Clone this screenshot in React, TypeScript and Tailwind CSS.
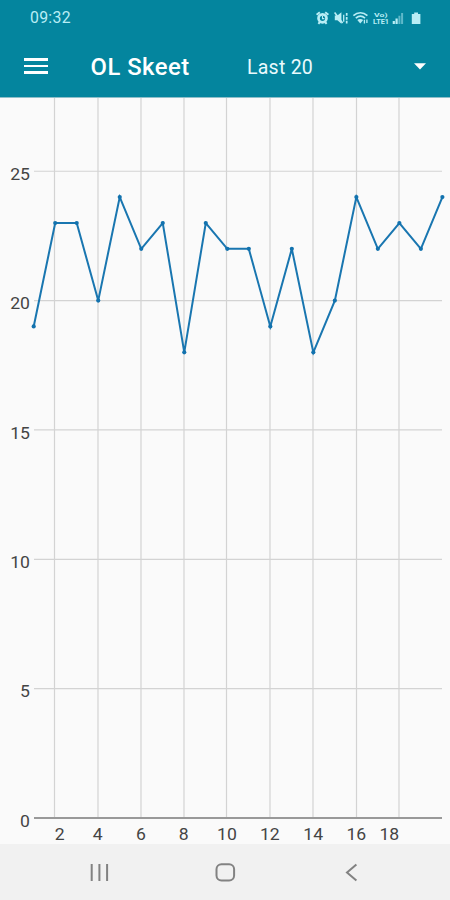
const scores = [19, 23, 23, 20, 24, 22, 23, 18, 23, 22, 22, 19, 22, 18, 20, 24, 22, 23, 22, 24]

const yTicks = [0, 5, 10, 15, 20, 25]

const xTicks = [
  { label: '2', line: 54.5, text: 59.7 },
  { label: '4', line: 98, text: 97.7 },
  { label: '6', line: 141, text: 141 },
  { label: '8', line: 184, text: 183.8 },
  { label: '10', line: 226.5, text: 227 },
  { label: '12', line: 270, text: 269.8 },
  { label: '14', line: 313, text: 313.2 },
  { label: '16', line: 356.5, text: 356.3 },
  { label: '18', line: 399, text: 389.3 },
]

const CHART_TOP = 98
const DIGIT_WIDTH = 9.9
const px = (i: number) => 33.7 + i * 21.51
const py = (v: number) => 818 - CHART_TOP - v * 25.87

function AxisLabel({ x, y, anchor, label }: { x: number; y: number; anchor: 'middle' | 'end'; label: string }) {
  return (
    <text x={x} y={y} textAnchor={anchor} textLength={label.length * DIGIT_WIDTH} lengthAdjust="spacingAndGlyphs">
      {label}
    </text>
  )
}

function StatusIcons() {
  return (
    <svg className="h-4 w-[108px] text-[#b9edf5]" viewBox="315 9 108 16" fill="none" stroke="currentColor">
      {/* alarm */}
      <circle cx="322.5" cy="17.3" r="4" strokeWidth="2.7" />
      <path d="M316.6 13.7l3.2-2.5M328.4 13.7l-3.2-2.5M318.4 22.8l1.5-1.8M326.6 22.8l-1.5-1.8" strokeWidth="2" />
      <path d="M322.5 15v2.6h1.8" strokeWidth="1.1" />
      {/* muted, vibrate */}
      <path d="M334.8 14.5h2.6l4-3.3v11.6l-4-3.5h-2.6z" fill="currentColor" stroke="none" />
      <path d="M334.6 11.5l8 10.6" strokeWidth="1.6" />
      <path d="M343.7 13.8v7" strokeWidth="1.3" />
      <path d="M346.7 12v10.6" strokeWidth="1.7" strokeDasharray="2.8 1.1" />
      {/* wifi */}
      <path d="M353.4 14.7c4.2-4 9.8-4 14 0M355.8 17.2c2.8-2.5 6.4-2.5 9.2 0" strokeWidth="1.6" />
      <path d="M357.3 19c1.7-1.5 4.2-1.5 5.9 0l-2.9 3.4z" fill="currentColor" stroke="none" />
      <path d="M364.4 18.8v3.8M366.9 18.5v3.4" strokeWidth="1.3" />
      {/* VoLTE */}
      <g fill="currentColor" stroke="none" className="font-[Roboto,sans-serif] font-bold">
        <text x="374" y="16.4" fontSize="6" textLength="13.5" lengthAdjust="spacingAndGlyphs">Vo)</text>
        <text x="373" y="23" fontSize="6.6" textLength="16" lengthAdjust="spacingAndGlyphs">LTE1</text>
      </g>
      {/* signal */}
      <path d="M393.8 20v2.9M396.6 17.6v5.3" strokeWidth="2.2" />
      <path d="M399.4 14.8v8.1M402.1 12v10.9" strokeWidth="2" opacity=".5" />
      {/* battery */}
      <path d="M414.2 11.6h3.8v1.5h2.4v10h-8.6v-10h2.4z" fill="currentColor" stroke="none" />
    </svg>
  )
}

function StatusBar() {
  return (
    <div className="flex h-9 items-center justify-between pr-[27px] pl-[30px]">
      <span className="text-[15.8px] tracking-[0.3px] text-[#b9edf5]">09:32</span>
      <StatusIcons />
    </div>
  )
}

function Toolbar() {
  return (
    <div className="flex h-[60px] items-center pr-6 pl-[23.5px]">
      <button aria-label="Menu" className="flex w-6 flex-col gap-1">
        <span className="h-[2.5px] bg-white" />
        <span className="h-[2.5px] bg-white" />
        <span className="h-[2.5px] bg-white" />
      </button>
      <h1 className="ml-[43px] w-[156.5px] pt-1 text-[23.8px] font-medium tracking-[0.5px] text-white">OL Skeet</h1>
      <button className="flex flex-1 items-center justify-between text-[19.5px] tracking-[0.25px] text-[#e9fafd]">
        <span className="pt-[3px]">Last 20</span>
        <svg className="h-[7px] w-3" viewBox="0 0 12 7" fill="white">
          <path d="M0 .3h12L6 6.6z" />
        </svg>
      </button>
    </div>
  )
}

function ScoreChart() {
  return (
    <svg className="block h-[746px] w-[450px]" viewBox="0 0 450 746">
      <g stroke="#d3d3d3" strokeWidth="1.2">
        {xTicks.map((t) => (
          <line key={t.label} x1={t.line} x2={t.line} y1="0" y2="720" />
        ))}
        {yTicks.slice(1).map((v) => (
          <line key={v} x1="34" x2="442" y1={py(v)} y2={py(v)} />
        ))}
      </g>
      <line x1="34" x2="442" y1="720" y2="720" stroke="#999" strokeWidth="2.2" />

      <g fill="#444" fontSize="15.8">
        {yTicks.map((v) => (
          <AxisLabel key={v} x={30} y={py(v) + 8.6} anchor="end" label={String(v)} />
        ))}
        {xTicks.map((t) => (
          <AxisLabel key={t.label} x={t.text} y={742.2} anchor="middle" label={t.label} />
        ))}
      </g>

      <polyline
        points={scores.map((s, i) => `${px(i)},${py(s)}`).join(' ')}
        fill="none"
        stroke="#1976b0"
        strokeWidth="2"
      />
      {scores.map((s, i) => (
        <circle key={i} cx={px(i)} cy={py(s)} r="2.1" fill="#1272ae" />
      ))}
    </svg>
  )
}

function NavBar() {
  return (
    <nav className="flex h-14 items-center bg-[#f1f1f1] px-9 text-[#828282]">
      <button aria-label="Recents" className="flex flex-1 justify-center">
        <svg className="h-6 w-6" viewBox="0 0 24 24" stroke="currentColor" strokeWidth="2">
          <path d="M4.7 4v17M12.4 4v17M20.1 4v17" />
        </svg>
      </button>
      <button aria-label="Home" className="flex flex-1 justify-center">
        <svg className="h-6 w-6" viewBox="0 0 24 24" fill="none" stroke="currentColor" strokeWidth="2">
          <rect x="3.5" y="4.2" width="17.6" height="16.4" rx="5" />
        </svg>
      </button>
      <button aria-label="Back" className="flex flex-1 justify-center">
        <svg className="h-6 w-6" viewBox="0 0 24 24" fill="none" stroke="currentColor" strokeWidth="2">
          <path d="M17.4 4.4L8 12.4l9.4 8" />
        </svg>
      </button>
    </nav>
  )
}

export default function App() {
  return (
    <div className="flex h-[900px] w-[450px] flex-col overflow-hidden bg-[#fafafa] font-[Roboto,sans-serif]">
      <header className="h-[98px] shrink-0 border-b border-[#8fbfc9] bg-[#04859e]">
        <StatusBar />
        <Toolbar />
      </header>
      <main className="h-[746px] shrink-0">
        <ScoreChart />
      </main>
      <NavBar />
    </div>
  )
}
